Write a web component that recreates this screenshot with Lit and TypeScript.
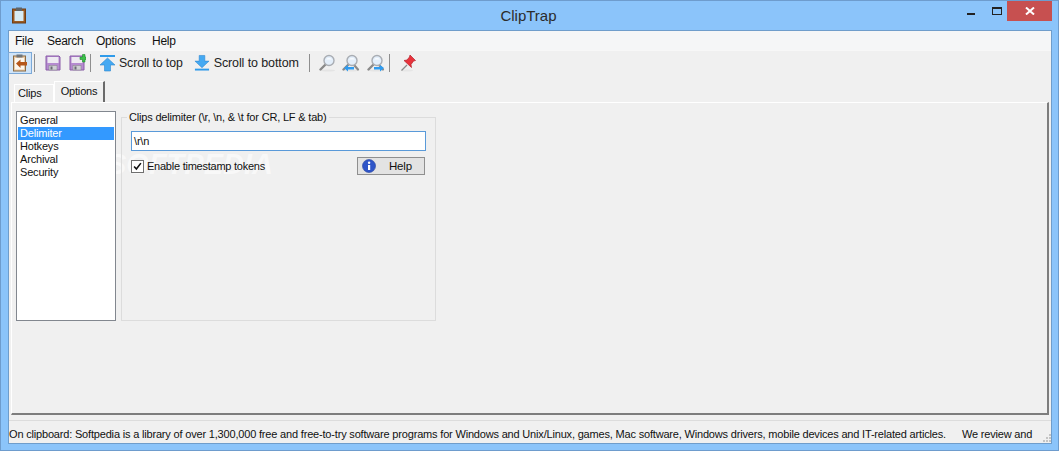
import { LitElement, html, css, svg } from "lit";
import { customElement } from "lit/decorators.js";

const floppy = (plus: boolean) => html`<svg class="ic" width="18" height="18" viewBox="0 0 18 18">
  <path d="M2 2h13l1 1v13H2z" fill="#b58ad0" stroke="#8a5ca8"/>
  <rect x="3.500" y="3" width="11" height="6" fill="#eeeaf2"/>
  <rect x="5" y="11.500" width="8" height="4.500" fill="#cfcfd4" stroke="#8c8c92" stroke-width=".6"/>
  <rect x="6.500" y="12.500" width="2" height="3" fill="#6a6a74"/>
  ${plus ? svg`<path d="M12 3h2.500V.5h2.500V3h1v2.500h-1V8h-2.500V5.500H12z" fill="#3cc04a" stroke="#1f8a2c" stroke-width=".6"/>` : ""}
</svg>`;

const lens = (arrow: "" | "l" | "r") => html`<svg class="ic" width="18" height="18" viewBox="0 0 18 18">
  <ellipse cx="9" cy="16.500" rx="7" ry="1" fill="#e4e4e4"/>
  <path d="M6 11 1.500 15.500" stroke="#8a8a8a" stroke-width="2.400" stroke-linecap="round"/>
  ${arrow ? svg`<path d="M12 11l4 4.500" stroke="#8a8a8a" stroke-width="2.200" stroke-linecap="round"/>` : ""}
  <circle cx="10" cy="6.500" r="5" fill="#e3eefa" stroke="#a9adb3" stroke-width="1.400"/>
  <path d="M7 5.500a3.500 3 0 0 1 6 0z" fill="#fff" opacity=".8"/>
  ${arrow === "l" ? svg`<path d="M2 14l4-3v2h6v2.400H6v2z" fill="#2e9bf0"/>` : ""}
  ${arrow === "r" ? svg`<path d="M17 14l-4-3v2H7v2.400h6v2z" fill="#2e9bf0"/>` : ""}
</svg>`;

@customElement("app-root")
export class AppRoot extends LitElement {
  static styles = css`
    :host {
      display: flex; flex-direction: column; position: relative; box-sizing: border-box;
      width: 1059px; height: 451px; overflow: hidden;
      background: #8bc4fa; border: 1px solid #6e9ccd;
      font: 11px "Liberation Sans", Arial, sans-serif; letter-spacing: -0.18px; color: #111;
    }
    .title { height: 29px; flex: none; display: flex; align-items: flex-start; position: relative; letter-spacing: 0; }
    .appicon { margin: 6px 0 0 11px; }
    .name { position: absolute; left: 0; right: 0; top: 6px; text-align: center; font-size: 15px; color: #2b2b2b; padding-right: 2px; }
    .caps { margin-left: auto; display: flex; margin-right: 6px; }
    .cap { display: flex; align-items: center; justify-content: center; height: 20px; width: 26px; }
    .cap.min { align-items: flex-end; padding-bottom: 6px; box-sizing: border-box; }
    .minbar { width: 8px; height: 2px; background: #222; }
    .maxbox { width: 8px; height: 5px; border: 1px solid #222; border-top-width: 2px; }
    .cap.close { width: 45px; background: #c75050; margin-left: -3px; }
    .client { flex: 1; margin: 0 6px 6px 7px; background: #f0f0f0; display: flex; flex-direction: column; border: 1px solid #6f9dcb; min-height: 0; position: relative; }
    .menu { height: 19px; flex: none; background: #f5f6f7; display: flex; align-items: center; padding-left: 6px; font-size: 12px; letter-spacing: -0.25px; color: #111; }
    .menu span { flex: none; }
    .m1 { width: 32px; } .m2 { width: 49px; } .m3 { width: 56px; }
    .toolbar { height: 27px; flex: none; display: flex; align-items: center; background: #f0f0f0; border-top: 1px solid #f7f7f7; box-sizing: border-box; padding-bottom: 3px; }
    .ic { display: block; flex: none; }
    .active { width: 24px; height: 22px; margin-left: -1px; box-sizing: border-box; border: 1px solid #7ba9d8; background: #cfe4f9; display: flex; align-items: center; justify-content: center; }
    .sep { width: 1px; height: 18px; background: #8e8e8e; flex: none; }
    .tbtext { font-size: 12.300px; letter-spacing: -0.1px; color: #222; margin-left: 3px; white-space: nowrap; }
    .tbtext.b { margin-left: 4px; font-size: 12.500px; }
    .tabs { height: 25px; flex: none; display: flex; align-items: flex-end; padding-left: 5px; }
    .tab { box-sizing: border-box; height: 18px; width: 40px; border: 1px solid #fff; border-bottom: none; display: flex; align-items: center; padding: 0 0 1px 3px; }
    .tab.on { height: 21px; width: 51px; background: #f0f0f0; border-right: 2px solid #6a6a6a; padding: 0 0 3px 0; justify-content: center; }
    .page { flex: 1; min-height: 0; margin: 0 2px; border: 1px solid #fff; border-right: 2px solid #7d7d7d; border-bottom: 2px solid #7d7d7d; box-sizing: border-box; padding: 8px 4px 0 4px; display: flex; gap: 5px; align-items: flex-start; background: #f0f0f0; position: relative; }
    .list { width: 100px; height: 210px; box-sizing: border-box; border: 1px solid #82878f; background: #fff; padding: 2px 1px 1px; flex: none; position: relative; z-index: 1; }
    .li { height: 13px; line-height: 13px; padding-left: 2px; white-space: nowrap; }
    .li.sel { background: #3399ff; color: #fff; }
    .group { width: 315px; height: 204px; margin-top: 6px; box-sizing: border-box; border: 1px solid #dcdcdc; flex: none; padding: 13px 9px 0 9px; position: relative; z-index: 1; }
    .legend { position: absolute; left: 5px; top: -7px; background: #f0f0f0; padding: 0 2px; line-height: 13px; white-space: nowrap; }
    .input { height: 20px; width: 295px; box-sizing: border-box; border: 1px solid #5a9ad9; background: #fff; padding-left: 2px; line-height: 19px; }
    .row { display: flex; align-items: center; margin-top: 6px; height: 18px; }
    .row > span { letter-spacing: -0.24px; }
    .cb { width: 13px; height: 13px; box-sizing: border-box; border: 1px solid #6f6f6f; background: #fff; margin-right: 3px; flex: none; }
    .help { margin-left: auto; margin-right: 1px; width: 68px; height: 18px; box-sizing: border-box; border: 1px solid #8f8f8f; background: #e3e3e3; display: flex; align-items: center; padding-left: 4px; }
    .help span { margin-left: 13px; font-size: 11.500px; }
    .status { height: 23px; flex: none; margin-top: 5px; box-sizing: border-box; border-top: 1px solid #dcdcdc; display: flex; align-items: center; gap: 16px; padding: 3px 0 0 0; white-space: nowrap; position: relative; overflow: hidden; }
    .grip { position: absolute; right: 0; bottom: 0; }
    .wm { position: absolute; left: 95px; top: 45px; font: italic bold 29px "Liberation Sans", sans-serif; letter-spacing: 0; color: #fff; opacity: .55; pointer-events: none; white-space: nowrap; }
  `;

  render() {
    return html`
      <div class="title">
        <svg class="appicon" width="15" height="17" viewBox="0 0 15 17">
          <rect x=".5" y="2" width="13" height="14" fill="#9a5a22" stroke="#6f3d14"/>
          <rect x="2.500" y="4" width="9" height="10" fill="#d7ecf5"/>
          <rect x="4" y=".5" width="6" height="3.500" fill="#5f6468"/>
        </svg>
        <div class="name">ClipTrap</div>
        <div class="caps">
          <div class="cap min"><div class="minbar"></div></div>
          <div class="cap"><div class="maxbox"></div></div>
          <div class="cap close"><svg width="10" height="8" viewBox="0 0 10 8"><path d="M1 .5 9 7.500M9 .5 1 7.500" stroke="#fff" stroke-width="2"/></svg></div>
        </div>
      </div>
      <div class="client">
        <div class="menu"><span class="m1">File</span><span class="m2">Search</span><span class="m3">Options</span><span>Help</span></div>
        <div class="toolbar">
          <div class="active">
            <svg width="16" height="18" viewBox="0 0 16 18">
              <rect x="1.500" y="2" width="12" height="15" fill="#e9c9a4" stroke="#8a6a45"/>
              <rect x="3" y="4" width="9" height="11.500" fill="#fbf6ee"/>
              <rect x="4.500" y=".5" width="6" height="3" fill="#70757a"/>
              <path d="M4 9.500l4.500-4V8H15v3.500H8.500V14z" fill="#b5561a"/>
            </svg>
          </div>
          <div class="sep" style="margin-left:2px"></div>
          <div style="margin-left:9px">${floppy(false)}</div>
          <div style="margin-left:6px">${floppy(true)}</div>
          <div class="sep" style="margin-left:4px"></div>
          <svg class="ic" style="margin-left:8px" width="17" height="18" viewBox="0 0 17 18">
            <rect x="1" y="1" width="15" height="2" fill="#2f9bea"/>
            <path d="M8.500 4 16 11h-4.500v6h-6v-6H1z" fill="#45a9f2" stroke="#2d86cf" stroke-width=".6"/>
          </svg>
          <span class="tbtext">Scroll to top</span>
          <svg class="ic" style="margin-left:11px" width="16" height="18" viewBox="0 0 17 18">
            <path d="M5.500 1h6v6H16l-7.500 7L1 7h4.500z" fill="#45a9f2" stroke="#2d86cf" stroke-width=".6"/>
            <rect x="1" y="15" width="15" height="2" fill="#2f9bea"/>
          </svg>
          <span class="tbtext b">Scroll to bottom</span>
          <div class="sep" style="margin-left:10px"></div>
          <div style="margin-left:9px">${lens("")}</div>
          <div style="margin-left:5px">${lens("l")}</div>
          <div style="margin-left:7px">${lens("r")}</div>
          <div class="sep" style="margin-left:4px"></div>
          <svg class="ic" style="margin-left:9px" width="18" height="18" viewBox="0 0 18 18">
            <ellipse cx="8" cy="16.500" rx="6" ry="1" fill="#e6e6e6"/>
            <path d="M8 11 2.500 16.500" stroke="#8a8a8a" stroke-width="1.200"/>
            <path d="M11 1l5.500 5.500-2 .5-2.500 3.500.5 3L5 6.500l3-.5L10.500 3z" fill="#e8333c" stroke="#b52029" stroke-width=".7"/>
          </svg>
        </div>
        <div class="tabs">
          <div class="tab">Clips</div>
          <div class="tab on">Options</div>
        </div>
        <div class="page">
          <div class="wm" aria-hidden="true">SOFTPEDIA</div>
          <div class="list">
            <div class="li">General</div>
            <div class="li sel">Delimiter</div>
            <div class="li">Hotkeys</div>
            <div class="li">Archival</div>
            <div class="li">Security</div>
          </div>
          <div class="group">
            <div class="legend">Clips delimiter (\\r, \\n, &amp; \\t for CR, LF &amp; tab)</div>
            <div class="input">\\r\\n</div>
            <div class="row">
              <svg class="cb" viewBox="0 0 13 13"><path d="M2.500 6.500 5.200 9.500 10.500 2.500" fill="none" stroke="#111" stroke-width="1.900"/></svg>
              <span>Enable timestamp tokens</span>
              <div class="help">
                <svg width="14" height="14" viewBox="0 0 14 14">
                  <circle cx="7" cy="7" r="6.500" fill="#2f55c8" stroke="#24409c" stroke-width=".6"/>
                  <rect x="6" y="6" width="2.200" height="5" fill="#fff"/>
                  <circle cx="7.100" cy="3.800" r="1.200" fill="#fff"/>
                </svg>
                <span>Help</span>
              </div>
            </div>
          </div>
        </div>
        <div class="status">
          <span>On clipboard: Softpedia is a library of over 1,300,000 free and free-to-try software programs for Windows and Unix/Linux, games, Mac software, Windows drivers, mobile devices and IT-related articles.</span>
          <span>We review and</span>
          <svg class="grip" width="10" height="10" viewBox="0 0 10 10"><path d="M8 1h2v2H8zM5 4h2v2H5zM8 4h2v2H8zM2 7h2v2H2zM5 7h2v2H5zM8 7h2v2H8z" fill="#c4c4c4"/></svg>
        </div>
      </div>
    `;
  }
}
